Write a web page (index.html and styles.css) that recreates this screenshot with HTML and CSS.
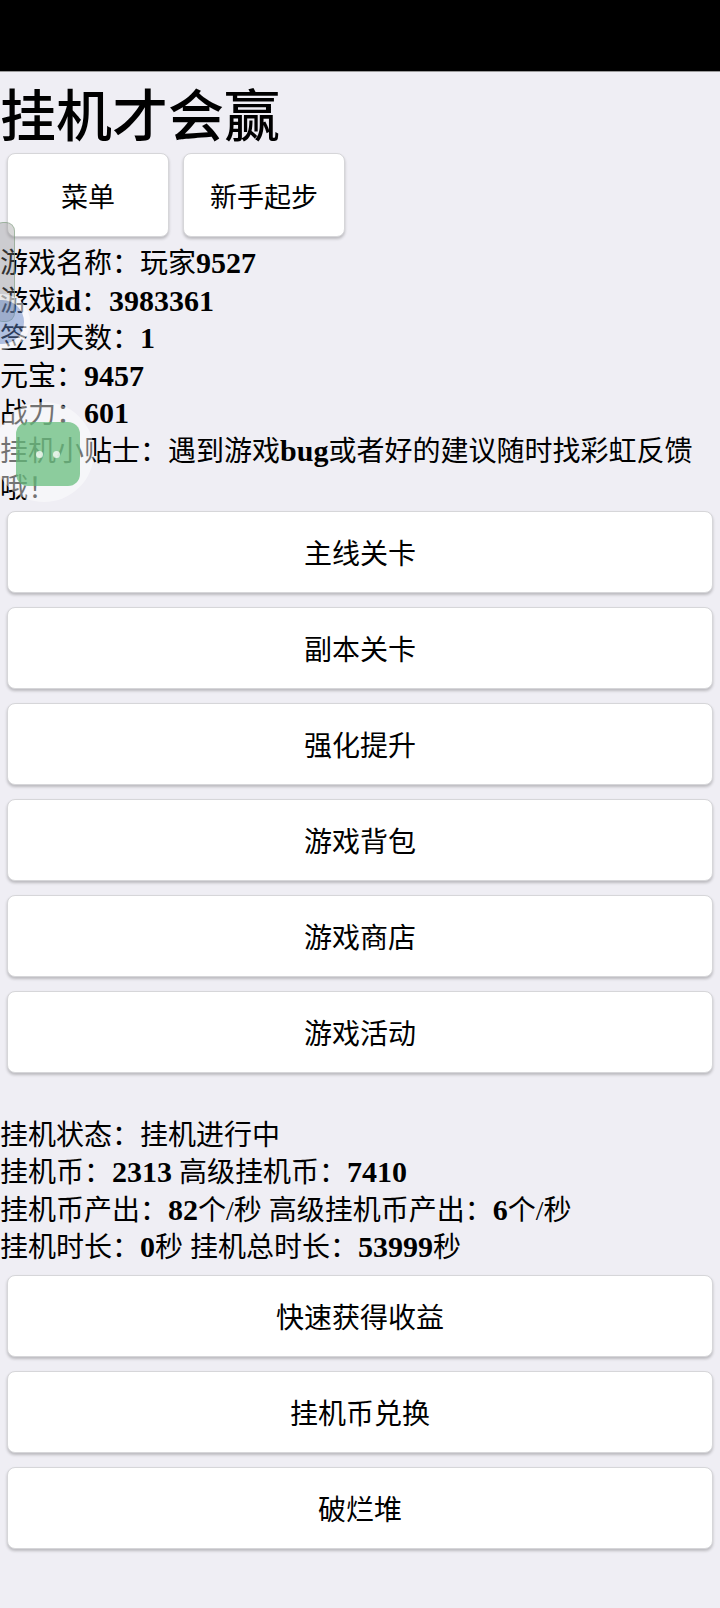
FILE: index.html
```html
<!DOCTYPE html>
<html lang="zh-CN">
<head>
    <meta charset="UTF-8">
    <meta name="viewport" content="width=device-width, initial-scale=1.0">
    <title>挂机才会赢</title>
    <link rel="stylesheet" href="styles.css">
</head>
<body>

<div class="status-bar"></div>

<h1 class="title">挂机才会赢</h1>

<div class="top-buttons">
    <button class="small-button">菜单</button>
    <button class="small-button">新手起步</button>
</div>

<div class="info">
    <p>游戏名称：玩家<b>9527</b></p>
    <p>游戏<b>id</b>：<b>3983361</b></p>
    <p>签到天数：<b>1</b></p>
    <p>元宝：<b>9457</b></p>
    <p>战力：<b>601</b></p>
    <p>挂机小贴士：遇到游戏<b>bug</b>或者好的建议随时找彩虹反馈哦！</p>
</div>

<div class="menu">
    <button class="menu-button">主线关卡</button>
    <button class="menu-button">副本关卡</button>
    <button class="menu-button">强化提升</button>
    <button class="menu-button">游戏背包</button>
    <button class="menu-button">游戏商店</button>
    <button class="menu-button">游戏活动</button>
</div>

<div class="info idle-info">
    <p>挂机状态：挂机进行中</p>
    <p>挂机币：<b>2313</b> 高级挂机币：<b>7410</b></p>
    <p>挂机币产出：<b>82</b>个/秒 高级挂机币产出：<b>6</b>个/秒</p>
    <p>挂机时长：<b>0</b>秒 挂机总时长：<b>53999</b>秒</p>
</div>

<div class="menu idle-menu">
    <button class="menu-button">快速获得收益</button>
    <button class="menu-button">挂机币兑换</button>
    <button class="menu-button">破烂堆</button>
</div>

<!-- floating widgets from the phone overlay -->
<div class="side-bar"></div>
<div class="side-ball"></div>
<div class="float-ring"></div>
<div class="float-button"><span class="dot"></span><span class="dot"></span></div>

</body>
</html>
```

FILE: styles.css
```css
body {
    margin: 0;
    padding: 0;
    background-color: #efeef4;
    font-family: "Noto Sans CJK SC", sans-serif;
    color: #000;
    position: relative;
    min-height: 1608px;
}

.status-bar {
    height: 71px;
    background-color: #000;
    border-bottom: 1px solid #9a9a9a;
}

.title {
    margin: 0;
    font-size: 56px;
    font-weight: 500;
    line-height: 80px;
}

.top-buttons {
    display: flex;
    gap: 14px;
    padding: 1px 7px 0;
}

button {
    font-family: "Noto Sans CJK SC", sans-serif;
    font-size: 28px;
    color: #000;
    background-color: #fff;
    border: 1px solid #d6d6d9;
    border-radius: 8px;
    box-shadow: 0 2px 3px rgba(0, 0, 0, 0.22);
    cursor: pointer;
    padding: 0;
}

.small-button {
    width: 162px;
    height: 84px;
    font-size: 27px;
}

.info {
    margin-top: 8px;
    font-family: "Liberation Serif", "Noto Sans CJK SC", serif;
    font-size: 28px;
    line-height: 37.5px;
}

.info p {
    margin: 0;
}

.info b {
    font-weight: 700;
    font-size: 30px;
    line-height: 1;
}

.menu {
    display: flex;
    flex-direction: column;
    gap: 14px;
    padding: 0 7px;
    margin-top: 3px;
}

.menu-button {
    width: 100%;
    height: 82px;
}

.idle-info {
    margin-top: 44px;
}

.idle-menu {
    margin-top: 8px;
}

.side-bar {
    position: absolute;
    left: -6px;
    top: 222px;
    width: 19px;
    height: 98px;
    border-radius: 9px;
    background-color: rgba(140, 140, 140, 0.35);
    border: 1px solid rgba(110, 150, 110, 0.5);
}

.side-ball {
    position: absolute;
    left: -20px;
    top: 300px;
    width: 44px;
    height: 44px;
    border-radius: 50%;
    background-color: rgba(100, 135, 200, 0.45);
    box-shadow: 0 0 0 6px rgba(255, 255, 255, 0.55);
}

.float-ring {
    position: absolute;
    left: -6px;
    top: 402px;
    width: 100px;
    height: 100px;
    border-radius: 50%;
    background-color: rgba(255, 255, 255, 0.45);
}

.float-button {
    position: absolute;
    left: 16px;
    top: 422px;
    width: 64px;
    height: 64px;
    border-radius: 12px;
    background-color: rgba(96, 186, 118, 0.7);
    display: flex;
    align-items: center;
    justify-content: center;
    gap: 10px;
}

.dot {
    width: 7px;
    height: 7px;
    border-radius: 50%;
    background-color: rgba(255, 255, 255, 0.75);
}
```
